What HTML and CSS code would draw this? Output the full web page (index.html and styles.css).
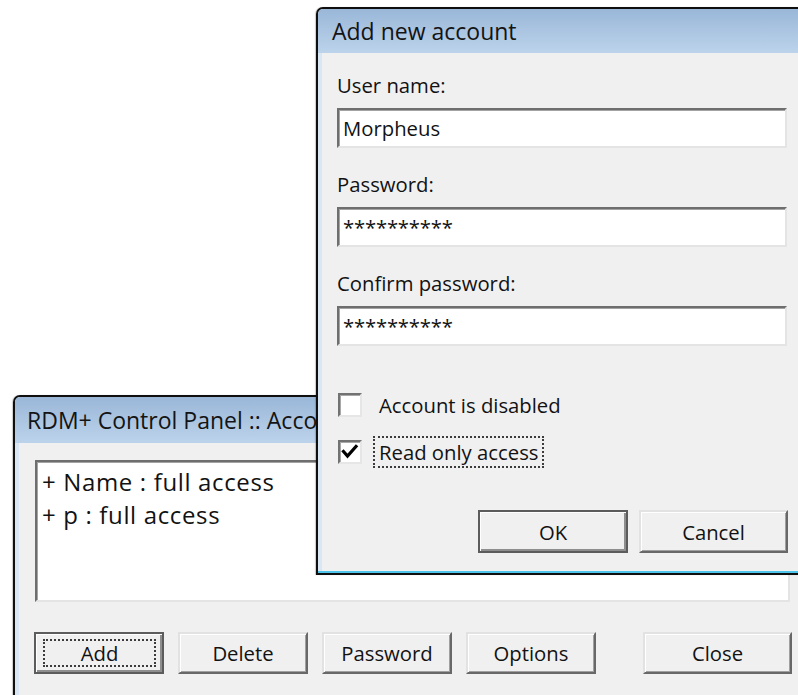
FILE: index.html
```html
<!DOCTYPE html>
<html lang="en">
<head>
<meta charset="utf-8">
<title>RDM+ Control Panel :: Accounts</title>
<link rel="stylesheet" href="styles.css">
</head>
<body>
<div class="desktop">

  <!-- main control panel window, behind the dialog -->
  <section class="window panel">
    <header class="titlebar">RDM+ Control Panel :: Accounts</header>
    <div class="client">
      <ul class="listbox">
        <li>+ Name : full access</li>
        <li>+ p : full access</li>
      </ul>
      <div class="panel-buttons">
        <button class="btn default"><span class="focus">Add</span></button>
        <button class="btn">Delete</button>
        <button class="btn">Password</button>
        <button class="btn">Options</button>
        <button class="btn btn-close">Close</button>
      </div>
    </div>
  </section>

  <!-- modal dialog on top -->
  <section class="window dialog">
    <header class="titlebar">Add new account</header>
    <div class="client">
      <label class="field-label">User name:</label>
      <div class="textbox">Morpheus</div>

      <label class="field-label">Password:</label>
      <div class="textbox secret">**********</div>

      <label class="field-label">Confirm password:</label>
      <div class="textbox secret">**********</div>

      <div class="check-rows">
        <div class="check-row">
          <span class="checkbox"></span>
          <span class="check-text">Account is disabled</span>
        </div>
        <div class="check-row">
          <span class="checkbox">
            <svg viewBox="0 0 20 20" width="20" height="20"><path d="M3.5 9.5 L7.5 14 L16 4.5" fill="none" stroke="#000" stroke-width="3.2" stroke-linecap="square"/></svg>
          </span>
          <span class="check-text focused">Read only access</span>
        </div>
      </div>

      <div class="dialog-buttons">
        <button class="btn default btn-ok">OK</button>
        <button class="btn btn-cancel">Cancel</button>
      </div>
    </div>
  </section>

</div>
</body>
</html>
```

FILE: styles.css
```css
* { box-sizing: border-box; }

html, body { margin: 0; padding: 0; }

body {
  background: #ffffff;
  font-family: "Open Sans", "Noto Sans", sans-serif;
  color: #121212;
  overflow: hidden;
}

.desktop {
  position: relative;
  width: 798px;
  height: 695px;
  overflow: hidden;
}

/* ---------- window chrome ---------- */
.window {
  position: absolute;
  display: flex;
  flex-direction: column;
  border: 2px solid #0f0f0f;
  border-radius: 7px 7px 0 0;
  background: #d9e6f4;
  box-shadow: -1px 0 1px rgba(0, 0, 0, 0.2);
}

.titlebar {
  flex: none;
  background: linear-gradient(#9ab7d8, #bcd3eb);
  border-radius: 5px 5px 0 0;
  font-size: 23px;
  color: #141414;
  white-space: nowrap;
  overflow: hidden;
}

.client {
  flex: 1;
  margin: 0 4px;
  background: #f0f0f0;
}

/* ---------- control panel ---------- */
.panel {
  left: 13px;
  top: 395px;
  width: 799px;
  height: 330px;
}

.panel .titlebar {
  height: 46px;
  line-height: 46px;
  padding-left: 12px;
}

.panel .client {
  padding: 17px 16px 0;
}

.listbox {
  margin: 0;
  height: 142px;
  padding: 3px 5px;
  list-style: none;
  background: #fff;
  border: 2px solid;
  border-color: #6e6e6e #e4e4e4 #e4e4e4 #6e6e6e;
  box-shadow: inset 1px 1px 0 #a3a3a3;
  font-size: 24px;
  line-height: 33px;
  letter-spacing: 0.65px;
}

.panel-buttons {
  display: flex;
  gap: 14px;
  margin: 30px -2px 0 -1px;
}

.panel .btn {
  width: 130px;
  height: 42px;
}

.panel .btn-close {
  width: 149px;
  margin-left: auto;
}

/* ---------- dialog ---------- */
.dialog {
  left: 316px;
  top: 7px;
  width: 492px;
  height: 568px;
  padding-bottom: 2px;
  box-shadow: inset 0 -2px 0 #4fc4ea, -1px 0 1px rgba(0, 0, 0, 0.2);
}

.dialog .titlebar {
  height: 44px;
  line-height: 44px;
  padding-left: 14px;
}

.dialog .client {
  padding: 20px 15px 0;
}

.field-label {
  display: block;
  font-size: 20.3px;
  line-height: 24px;
}

.textbox {
  height: 40px;
  margin-top: 11px;
  padding-left: 4px;
  background: #fff;
  border: 2px solid;
  border-color: #6e6e6e #e4e4e4 #e4e4e4 #6e6e6e;
  box-shadow: inset 1px 1px 0 #a3a3a3;
  font-size: 20.3px;
  line-height: 36px;
  white-space: nowrap;
}

.textbox + .field-label {
  margin-top: 24px;
}

.textbox.secret {
  letter-spacing: -0.2px;
}

.check-rows {
  display: flex;
  flex-direction: column;
  gap: 15px;
  margin-top: 43px;
  margin-left: 1px;
}

.check-row {
  display: flex;
  align-items: center;
  height: 32px;
}

.checkbox {
  flex: none;
  width: 24px;
  height: 24px;
  display: flex;
  align-items: center;
  justify-content: center;
  background: #fff;
  border: 2px solid;
  border-color: #727272 #e6e6e6 #e6e6e6 #727272;
  box-shadow: inset 1px 1px 0 #a8a8a8;
}

.check-text {
  margin-left: 11px;
  padding: 0 4px;
  border: 2px solid transparent;
  font-size: 20.3px;
  line-height: 28px;
  white-space: nowrap;
}

.check-text.focused {
  border: 2px dotted #3c3c3c;
}

.dialog-buttons {
  display: flex;
  justify-content: flex-end;
  gap: 11px;
  margin: 42px -1px 0 0;
}

.dialog .btn {
  height: 43px;
}

.btn-ok { width: 150px; }
.btn-cancel { width: 149px; }

/* ---------- push buttons ---------- */
.btn {
  display: flex;
  align-items: center;
  justify-content: center;
  padding: 0;
  font-family: inherit;
  font-size: 20.3px;
  color: #121212;
  background: #f0f0f0;
  border: 2px solid;
  border-color: #e2e2e2 #686868 #686868 #e2e2e2;
  box-shadow: inset 1px 1px 0 #ffffff, inset -1px -1px 0 #a0a0a0;
}

.btn.default {
  border-color: #5c5c5c;
  box-shadow: inset 1px 1px 0 #ffffff, inset -2px -2px 0 #8e8e8e;
}

.btn .focus {
  flex: 1;
  align-self: stretch;
  display: flex;
  align-items: center;
  justify-content: center;
  margin: 5px 6px 5px 7px;
  border: 2px dotted #3c3c3c;
}
```
